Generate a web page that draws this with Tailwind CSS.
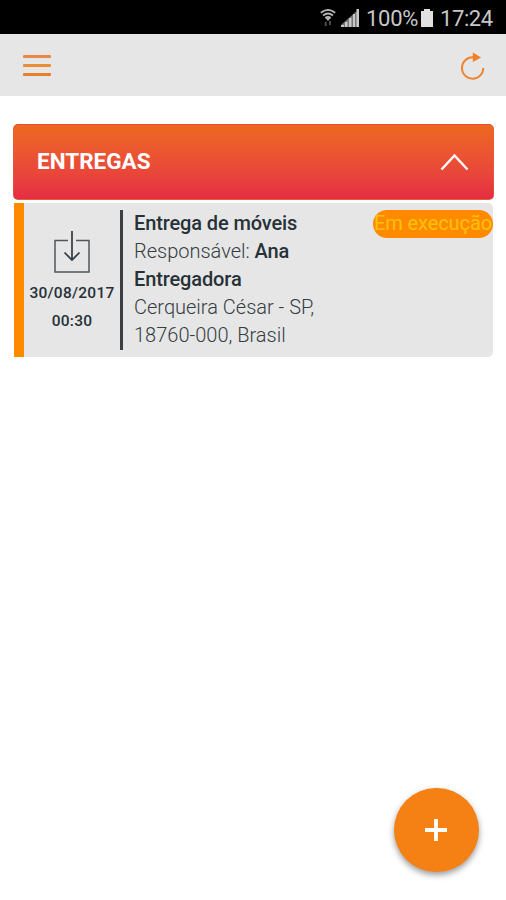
<!DOCTYPE html>
<html lang="pt-BR">
<head>
  <meta charset="UTF-8">
  <meta name="viewport" content="width=device-width, initial-scale=1">
  <title>Entregas</title>
  <script src="https://cdn.jsdelivr.net/npm/@tailwindcss/browser@4"></script>
</head>
<body class="bg-white h-screen overflow-hidden font-[Roboto,sans-serif] text-[#263238]">
  <!-- Status bar -->
  <div class="h-[34px] bg-black flex items-center justify-end pr-[14px] pt-[3px] text-[#c8c8c8] text-[22px] leading-none whitespace-nowrap">
    <svg class="w-4 h-[18px] mr-[5px] mb-[2px]" viewBox="0 0 16 18" fill="none" stroke="#b4b4b4" stroke-width="1.8">
      <path d="M.8 3.8Q8-2 15.2 3.8M3 6.5Q8 2.5 13 6.5M5.3 9Q8 7 10.7 9"/>
      <path d="M5 8.5h6L8 12z" fill="#b4b4b4" stroke="none"/>
      <path d="M5.7 13v4M10 12v4" stroke="#555"/>
    </svg>
    <svg class="w-[18px] h-[18px] mr-[7px] mb-px" viewBox="0 0 18 18">
      <path d="M0 18v-2L18 0v18z" fill="#777"/>
      <path d="M0 16h3v2H0zM4 13h2.500v5H4zM8 9h2.500v9H8zM12 5h2v13h-2zM15.500 0H18v18h-2.500z" fill="#c8c8c8"/>
    </svg>
    <span class="w-[51px] tracking-[-0.3px]">100%</span>
    <svg class="w-3 h-[18px] ml-1 mr-[7px] mb-[2px]" viewBox="0 0 12 18" fill="#e0e0e0">
      <path d="M3 0h6v2h3v16H0V2h3z"/>
    </svg>
    <span class="w-[52px] tracking-[-0.4px]">17:24</span>
  </div>

  <!-- Navbar -->
  <header class="h-[62px] bg-[#e6e6e6] flex justify-between items-center pl-[23px] pr-[20px]">
    <button class="w-7 flex flex-col gap-[6px]" aria-label="Menu">
      <span class="h-[3px] rounded-[1px] bg-[#e8894a]"></span>
      <span class="h-[3px] rounded-[1px] bg-[#e88f35]"></span>
      <span class="h-[3px] rounded-[1px] bg-[#e87f2c]"></span>
    </button>
    <button aria-label="Atualizar">
      <svg class="w-[26px] h-[28px] mt-[2px]" viewBox="0 0 26 28" fill="none">
        <path d="M13 5.3A10.7 10.7 0 1 0 23.3 16" stroke="#ee8430" stroke-width="1.9"/>
        <path d="M12.8 .5l8.3 5-8.3 4.5z" fill="#f08020"/>
      </svg>
    </button>
  </header>

  <!-- Content -->
  <main class="pt-7 pl-[13px] pr-3">
    <div class="h-[76px] rounded-[5px] border border-[#ea5a3c]/60 bg-linear-to-b from-[#ee681d] to-[#e62d43] flex items-center justify-between pl-[23px] pr-[23px]">
      <h2 class="text-white text-[22.5px] font-bold">ENTREGAS</h2>
      <svg class="w-[30px] h-[18px]" viewBox="0 0 30 18" fill="none" stroke="#fff" stroke-width="2.4">
        <path d="M1.500 16.5L14.500 2.5l13 14"/>
      </svg>
    </div>

    <div class="mt-[3px] ml-px mr-px h-[154px] bg-[#e6e6e6] border-l-10 border-[#ff8a00] rounded-r-[5px] flex">
      <div class="w-[96px] pt-7 flex flex-col items-center text-[15.5px] leading-7 font-medium tracking-[0.25px] whitespace-nowrap">
        <svg class="w-9 h-[42px] mb-[6px]" viewBox="0 0 36 42" fill="none" stroke="#50575b" stroke-width="1.5">
          <path d="M14 9.5H1V41h34V9.5H22"/>
          <path d="M18 0v29M10.5 21.5L18 29l7.5-7.5" stroke="#333a3e" stroke-width="1.7"/>
        </svg>
        <span>30/08/2017</span>
        <span>00:30</span>
      </div>
      <div class="w-[3px] h-[140px] mt-[7px] bg-[#3b3f42]"></div>
      <div class="w-[200px] ml-[11px] pt-[6px] text-[20px] leading-7 font-light text-[#353d42] whitespace-nowrap">
        <p class="font-medium tracking-[-0.12px] text-[#263238]">Entrega de móveis</p>
        <p>Responsável: <b class="font-medium tracking-[-0.12px] text-[#263238]">Ana</b></p>
        <p class="font-medium tracking-[-0.12px] text-[#263238]">Entregadora</p>
        <p>Cerqueira César - SP,</p>
        <p>18760-000, Brasil</p>
      </div>
      <span class="ml-auto mt-[7px] w-[120px] h-7 rounded-full bg-[#ff8a00] text-[#ffc107] text-[20px] leading-[26px] tracking-[-0.1px] text-center whitespace-nowrap">Em execução</span>
    </div>
  </main>

  <!-- Add button -->
  <button class="fixed right-[27px] bottom-[28px] w-[85px] h-[84px] rounded-full bg-[#f58014] shadow-[0_3px_6px_rgba(0,0,0,0.4)] flex items-center justify-center" aria-label="Adicionar">
    <svg class="w-[22px] h-[22px] mr-px" viewBox="0 0 22 22" stroke="#fff" stroke-width="3.8">
      <path d="M11 0v22M0 11h22"/>
    </svg>
  </button>
</body>
</html>
